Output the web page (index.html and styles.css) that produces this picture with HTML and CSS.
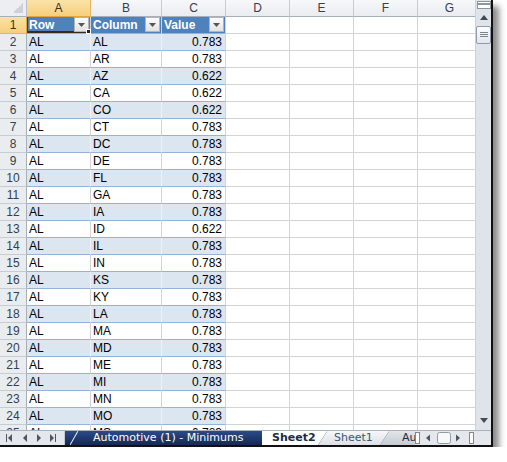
FILE: index.html
```html
<!DOCTYPE html>
<html>
<head>
<meta charset="utf-8">
<link rel="stylesheet" href="styles.css">
</head>
<body>
<div class="window">
  <div class="main">
    <div class="sheet">
      <div class="row">
        <div class="corner"></div>
        <div class="ch selh">A</div><div class="ch">B</div><div class="ch">C</div><div class="ch">D</div><div class="ch">E</div><div class="ch">F</div><div class="ch">G</div>
      </div>
      <div class="row">
        <div class="rh selrh">1</div>
        <div class="c th sel"><span>Row</span><span class="fb"><svg width="7" height="4" viewBox="0 0 7 4"><path d="M0 0H7L3.5 4Z"/></svg></span><span class="handle"></span></div>
        <div class="c th"><span>Column</span><span class="fb"><svg width="7" height="4" viewBox="0 0 7 4"><path d="M0 0H7L3.5 4Z"/></svg></span></div>
        <div class="c th thl"><span>Value</span><span class="fb"><svg width="7" height="4" viewBox="0 0 7 4"><path d="M0 0H7L3.5 4Z"/></svg></span></div>
        <div class="c"></div><div class="c"></div><div class="c"></div><div class="c"></div>
      </div>
      <div class="row band"><div class="rh">2</div><div class="c t">AL</div><div class="c t">AL</div><div class="c t n">0.783</div><div class="c"></div><div class="c"></div><div class="c"></div><div class="c"></div></div>
      <div class="row"><div class="rh">3</div><div class="c t">AL</div><div class="c t">AR</div><div class="c t n">0.783</div><div class="c"></div><div class="c"></div><div class="c"></div><div class="c"></div></div>
      <div class="row band"><div class="rh">4</div><div class="c t">AL</div><div class="c t">AZ</div><div class="c t n">0.622</div><div class="c"></div><div class="c"></div><div class="c"></div><div class="c"></div></div>
      <div class="row"><div class="rh">5</div><div class="c t">AL</div><div class="c t">CA</div><div class="c t n">0.622</div><div class="c"></div><div class="c"></div><div class="c"></div><div class="c"></div></div>
      <div class="row band"><div class="rh">6</div><div class="c t">AL</div><div class="c t">CO</div><div class="c t n">0.622</div><div class="c"></div><div class="c"></div><div class="c"></div><div class="c"></div></div>
      <div class="row"><div class="rh">7</div><div class="c t">AL</div><div class="c t">CT</div><div class="c t n">0.783</div><div class="c"></div><div class="c"></div><div class="c"></div><div class="c"></div></div>
      <div class="row band"><div class="rh">8</div><div class="c t">AL</div><div class="c t">DC</div><div class="c t n">0.783</div><div class="c"></div><div class="c"></div><div class="c"></div><div class="c"></div></div>
      <div class="row"><div class="rh">9</div><div class="c t">AL</div><div class="c t">DE</div><div class="c t n">0.783</div><div class="c"></div><div class="c"></div><div class="c"></div><div class="c"></div></div>
      <div class="row band"><div class="rh">10</div><div class="c t">AL</div><div class="c t">FL</div><div class="c t n">0.783</div><div class="c"></div><div class="c"></div><div class="c"></div><div class="c"></div></div>
      <div class="row"><div class="rh">11</div><div class="c t">AL</div><div class="c t">GA</div><div class="c t n">0.783</div><div class="c"></div><div class="c"></div><div class="c"></div><div class="c"></div></div>
      <div class="row band"><div class="rh">12</div><div class="c t">AL</div><div class="c t">IA</div><div class="c t n">0.783</div><div class="c"></div><div class="c"></div><div class="c"></div><div class="c"></div></div>
      <div class="row"><div class="rh">13</div><div class="c t">AL</div><div class="c t">ID</div><div class="c t n">0.622</div><div class="c"></div><div class="c"></div><div class="c"></div><div class="c"></div></div>
      <div class="row band"><div class="rh">14</div><div class="c t">AL</div><div class="c t">IL</div><div class="c t n">0.783</div><div class="c"></div><div class="c"></div><div class="c"></div><div class="c"></div></div>
      <div class="row"><div class="rh">15</div><div class="c t">AL</div><div class="c t">IN</div><div class="c t n">0.783</div><div class="c"></div><div class="c"></div><div class="c"></div><div class="c"></div></div>
      <div class="row band"><div class="rh">16</div><div class="c t">AL</div><div class="c t">KS</div><div class="c t n">0.783</div><div class="c"></div><div class="c"></div><div class="c"></div><div class="c"></div></div>
      <div class="row"><div class="rh">17</div><div class="c t">AL</div><div class="c t">KY</div><div class="c t n">0.783</div><div class="c"></div><div class="c"></div><div class="c"></div><div class="c"></div></div>
      <div class="row band"><div class="rh">18</div><div class="c t">AL</div><div class="c t">LA</div><div class="c t n">0.783</div><div class="c"></div><div class="c"></div><div class="c"></div><div class="c"></div></div>
      <div class="row"><div class="rh">19</div><div class="c t">AL</div><div class="c t">MA</div><div class="c t n">0.783</div><div class="c"></div><div class="c"></div><div class="c"></div><div class="c"></div></div>
      <div class="row band"><div class="rh">20</div><div class="c t">AL</div><div class="c t">MD</div><div class="c t n">0.783</div><div class="c"></div><div class="c"></div><div class="c"></div><div class="c"></div></div>
      <div class="row"><div class="rh">21</div><div class="c t">AL</div><div class="c t">ME</div><div class="c t n">0.783</div><div class="c"></div><div class="c"></div><div class="c"></div><div class="c"></div></div>
      <div class="row band"><div class="rh">22</div><div class="c t">AL</div><div class="c t">MI</div><div class="c t n">0.783</div><div class="c"></div><div class="c"></div><div class="c"></div><div class="c"></div></div>
      <div class="row"><div class="rh">23</div><div class="c t">AL</div><div class="c t">MN</div><div class="c t n">0.783</div><div class="c"></div><div class="c"></div><div class="c"></div><div class="c"></div></div>
      <div class="row band"><div class="rh">24</div><div class="c t">AL</div><div class="c t">MO</div><div class="c t n">0.783</div><div class="c"></div><div class="c"></div><div class="c"></div><div class="c"></div></div>
      <div class="row"><div class="rh">25</div><div class="c t">AL</div><div class="c t">MS</div><div class="c t n">0.783</div><div class="c"></div><div class="c"></div><div class="c"></div><div class="c"></div></div>
    </div>
    <div class="vscroll">
      <div class="split"></div>
      <svg class="up" width="8" height="5" viewBox="0 0 8 5"><path d="M0 5H8L4 0Z"/></svg>
      <div class="thumb"><svg width="8" height="6" viewBox="0 0 8 6"><path d="M0 0.5H8M0 2.5H8M0 4.5H8"/></svg></div>
      <div class="track"></div>
      <svg class="down" width="8" height="5" viewBox="0 0 8 5"><path d="M0 0H8L4 5Z"/></svg>
    </div>
  </div>
  <div class="tabbar">
    <div class="nav">
      <svg width="62" height="14" viewBox="0 0 62 14"><path class="g" d="M6 3H7V11H6Z M12 3V11L8 7Z M27 3V11L23 7Z M37 3V11L41 7Z M50 3V11L54 7Z M55 3H56V11H55Z"/></svg>
    </div>
    <div class="tab auto">Automotive (1) - Minimums</div>
    <div class="tab sheet2">Sheet2</div>
    <div class="tab sheet1">Sheet1</div>
    <div class="tab au">Au</div>
    <div class="hscroll">
      <svg width="60" height="14" viewBox="0 0 60 14"><rect class="bx" x="0.5" y="1.5" width="4" height="11"/><path class="g" d="M15 3.5V10.5L11 7Z"/><rect class="th2" x="22.5" y="1.5" width="13" height="11" rx="2"/><path class="g" d="M41 3.5V10.5L45 7Z"/><rect class="bx" x="54.5" y="1.5" width="4" height="11"/></svg>
    </div>
    <div class="corner2"></div>
  </div>
</div>
</body>
</html>
```
FILE: styles.css
```css
* { box-sizing: border-box; }
body {
  margin: 0;
  background: #fff;
  font-family: "Liberation Sans", Arial, sans-serif;
  font-size: 12px;
}
.window {
  width: 493px;
  height: 447px;
  border-right: 2px solid #111;
  border-bottom: 2px solid #111;
  box-shadow: 6px 6px 6px rgba(0, 0, 0, 0.45);
  display: flex;
  flex-direction: column;
  background: #fff;
}
.main { display: flex; height: 430px; }
.sheet { width: 475px; height: 430px; overflow: hidden; }
.row {
  display: grid;
  grid-template-columns: 27px 64px 71px 64px 64px 64px 64px 64px;
  height: 17px;
}
.row > div {
  height: 17px;
  line-height: 16px;
  border-right: 1px solid #d4d4d4;
  border-bottom: 1px solid #d4d4d4;
  white-space: nowrap;
  overflow: hidden;
}
.corner {
  background: #eceef1 linear-gradient(to top left, #cdd2d8 0 50%, transparent 50%) no-repeat right 3px bottom 3px / 10px 10px;
  border-right-color: #b9c0c9 !important;
  border-bottom-color: #a7afb9 !important;
}
.ch {
  background: linear-gradient(#f7f8fa, #e9ecf0);
  border-right-color: #c6ccd4 !important;
  border-bottom-color: #a7afb9 !important;
  text-align: center;
  color: #34404f;
}
.ch.selh {
  background: linear-gradient(#fbe3a8, #f6cf7b);
  border-bottom-color: #e2a43c !important;
  border-right-color: #e5b567 !important;
  color: #3a3020;
}
.rh {
  background: #eaedf0;
  border-right-color: #a7afb9 !important;
  border-bottom-color: #c6ccd4 !important;
  text-align: center;
  color: #34404f;
}
.rh.selrh {
  background: linear-gradient(#fbe3a8, #f6cf7b);
  border-right-color: #e2a43c !important;
  border-bottom-color: #e5b567 !important;
  color: #3a3020;
}
.c { padding: 0 2px; color: #000; }
.t { border-bottom-color: #95b3d7 !important; }
.band .t { background: #dce6f1; border-right-color: #eef2f8; }
.band .t.n { border-right-color: #d4d4d4; }
.n { text-align: right; padding-right: 3px; }
.th {
  background: #4f81bd;
  color: #fff;
  font-weight: bold;
  display: flex;
  justify-content: space-between;
  align-items: flex-start;
  padding-right: 0;
  border-bottom-color: #95b3d7 !important;
}
.th.thl { border-right-color: #d4d4d4; }
.th > span:first-child { line-height: 16px; }
.fb {
  width: 15px;
  height: 15px;
  margin-right: 1px;
  border: 1px solid #b4b4b4;
  background: linear-gradient(#fbfbfb, #e3e3e3);
  display: flex;
  align-items: center;
  justify-content: center;
}
.fb svg { fill: #555; display: block; }
.sel { position: relative; box-shadow: inset 1px 0 0 #2a3f63, inset 0 -2px 0 #3a2a18; overflow: visible !important; }
.handle {
  position: absolute;
  right: -1px;
  bottom: -1px;
  width: 5px;
  height: 5px;
  background: #222;
  border: 1px solid #fff;
}
.vscroll {
  width: 16px;
  height: 430px;
  background: #dfe4ea;
  border-left: 1px solid #cbd2da;
  display: flex;
  flex-direction: column;
  align-items: center;
}
.split {
  width: 14px;
  height: 8px;
  margin-top: 1px;
  border: 1px solid #8d949c;
  background: linear-gradient(#fff 1px, #8f969e 1px 3px, #fff 3px);
}
.up { margin-top: 6px; fill: #444a52; display: block; }
.down { fill: #444a52; display: block; margin-bottom: 7px; }
.thumb {
  margin-top: 6px;
  width: 15px;
  height: 18px;
  border: 1px solid #8f9bab;
  border-radius: 2px;
  background: linear-gradient(#fdfdfe, #e2e7ed);
  display: flex;
  align-items: center;
  justify-content: center;
}
.thumb svg { stroke: #7b8490; stroke-width: 1; display: block; }
.track { flex: 1; }
.tabbar {
  height: 15px;
  display: flex;
  background: #e4e7eb;
  border-top: 1px solid #aab1ba;
  font-family: "DejaVu Sans", Verdana, sans-serif;
  font-size: 11px;
  line-height: 14px;
}
.nav { width: 65px; flex: none; border-right: 1px solid #c3c9d0; }
.nav svg, .hscroll svg { display: block; }
.g { fill: #50565e; }
.bx { fill: #fff; stroke: #7f8792; }
.th2 { fill: #f7f8fa; stroke: #8f9bab; }
.tab { flex: none; white-space: nowrap; overflow: hidden; height: 14px; }
.auto {
  width: 197px;
  padding-left: 28px;
  color: #fff;
  background:
    linear-gradient(to bottom right, transparent calc(50% - 1px), #e8ecf4 50%, transparent calc(50% + 1px)) no-repeat 5px 0 / 8px 14px,
    linear-gradient(#2b4b86, #14285a);
}
.sheet2 {
  width: 65px;
  padding-left: 10px;
  background: #fff;
  color: #1c2a44;
  font-weight: bold;
}
.sheet1 {
  width: 71px;
  margin-left: -9px;
  padding-left: 16px;
  color: #3b5578;
  clip-path: polygon(0 100%, 9px 0, 100% 0, 100% 100%);
  background:
    linear-gradient(to bottom right, transparent calc(50% - 0.8px), #8e96a1 50%, transparent calc(50% + 0.8px)) no-repeat 0 0 / 9px 14px,
    linear-gradient(#f6f7f9, #dde1e6);
}
.au {
  width: 35px;
  margin-left: -9px;
  padding-left: 22px;
  color: #1c2a44;
  clip-path: polygon(0 100%, 9px 0, 100% 0, 100% 100%);
  background:
    linear-gradient(to bottom right, transparent calc(50% - 0.8px), #8e96a1 50%, transparent calc(50% + 0.8px)) no-repeat 0 0 / 9px 14px,
    linear-gradient(#e2e5e9, #c7ccd3);
}
.hscroll { width: 60px; flex: none; }
.corner2 { flex: 1; background: #e4e7eb; }
```
